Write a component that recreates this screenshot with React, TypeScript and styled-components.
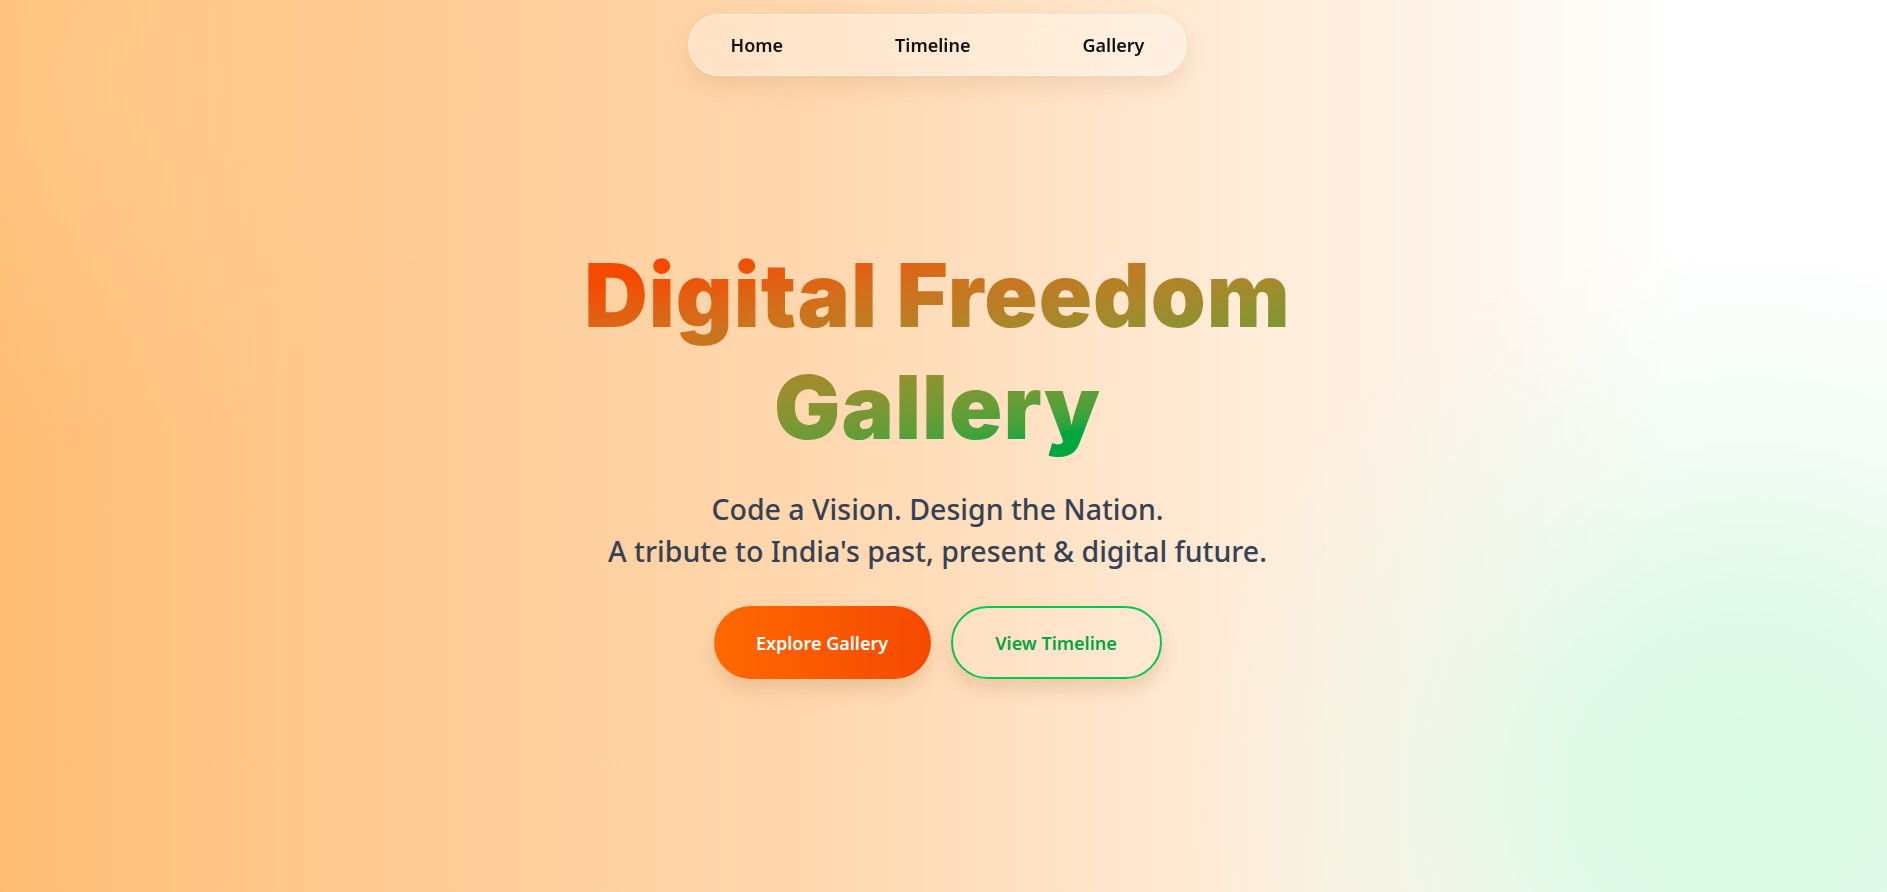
import styled, { createGlobalStyle } from "styled-components";

const GlobalStyle = createGlobalStyle`
  html, body {
    margin: 0;
    padding: 0;
  }
  body {
    font-family: "Noto Sans", "Open Sans", Arial, sans-serif;
    -webkit-font-smoothing: antialiased;
  }
`;

const Page = styled.div`
  width: 100%;
  min-height: 892px;
  box-sizing: border-box;
  padding-right: 12px;
  overflow: hidden;
  display: flex;
  flex-direction: column;
  align-items: center;
  background:
    radial-gradient(circle 560px at 1750px 790px, rgba(217, 250, 228, 1) 0%, rgba(219, 249, 229, 0.9) 30%, rgba(228, 249, 233, 0.45) 62%, rgba(232, 250, 236, 0) 100%),
    radial-gradient(circle 380px at 100px 77px, rgba(255, 212, 158, 0.35) 0%, rgba(255, 212, 158, 0) 100%),
    linear-gradient(to right, #ffbd74 0%, #ffca92 20%, #ffd9b2 45%, #ffebd7 65%, #fff6ee 79%, #ffffff 89%, #ffffff 100%);
`;

const NavBar = styled.nav`
  margin-top: 14px;
  height: 62px;
  box-sizing: border-box;
  display: flex;
  align-items: center;
  gap: 80px;
  padding: 0 26px;
  border-radius: 999px;
  background: rgba(255, 255, 255, 0.35);
  border: 1px solid rgba(255, 255, 255, 0.35);
  box-shadow: 0 10px 22px rgba(160, 100, 40, 0.14);
  backdrop-filter: blur(12px);
`;

const NavLink = styled.a`
  padding: 8px 16px;
  font-size: 18px;
  font-weight: 600;
  color: #111111;
  text-decoration: none;
  cursor: pointer;
`;

const Hero = styled.main`
  display: flex;
  flex-direction: column;
  align-items: center;
  text-align: center;
  padding-top: 163px;
`;

const Title = styled.h1`
  width: 1120px;
  margin: 0;
  font-family: Inter, "Noto Sans", sans-serif;
  font-weight: 900;
  font-size: 88px;
  line-height: 112px;
  letter-spacing: 1px;
  background: linear-gradient(to bottom right in oklab, #f54900 20%, #00a63e 74%);
  -webkit-background-clip: text;
  background-clip: text;
  color: transparent;
`;

const Tagline = styled.p`
  margin: 25px 0 0;
  font-size: 28.5px;
  font-weight: 500;
  line-height: 42px;
  color: #364153;
`;

const Actions = styled.div`
  display: flex;
  gap: 20px;
  margin-top: 34px;
`;

const Button = styled.button<{ $variant: "solid" | "outline" }>`
  height: 73px;
  box-sizing: border-box;
  padding: 0 40px;
  border-radius: 999px;
  font-family: "Noto Sans", "Open Sans", sans-serif;
  font-size: 18px;
  font-weight: 600;
  cursor: pointer;
  box-shadow: 0 10px 18px rgba(150, 90, 30, 0.18);
  ${(p) =>
    p.$variant === "solid"
      ? `
    border: none;
    color: #ffffff;
    background: linear-gradient(to right, #ff6900, #f54900);
    min-width: 217px;
  `
      : `
    border: 2px solid #00c950;
    color: #00a63e;
    background: rgba(255, 255, 255, 0.08);
    min-width: 211px;
  `}
`;

export default function App() {
  return (
    <>
      <GlobalStyle />
      <Page>
        <NavBar>
          <NavLink>Home</NavLink>
          <NavLink>Timeline</NavLink>
          <NavLink>Gallery</NavLink>
        </NavBar>
        <Hero>
          <Title>
            Digital Freedom
            <br />
            Gallery
          </Title>
          <Tagline>
            Code a Vision. Design the Nation.
            <br />
            A tribute to India's past, present &amp; digital future.
          </Tagline>
          <Actions>
            <Button $variant="solid">Explore Gallery</Button>
            <Button $variant="outline">View Timeline</Button>
          </Actions>
        </Hero>
      </Page>
    </>
  );
}
